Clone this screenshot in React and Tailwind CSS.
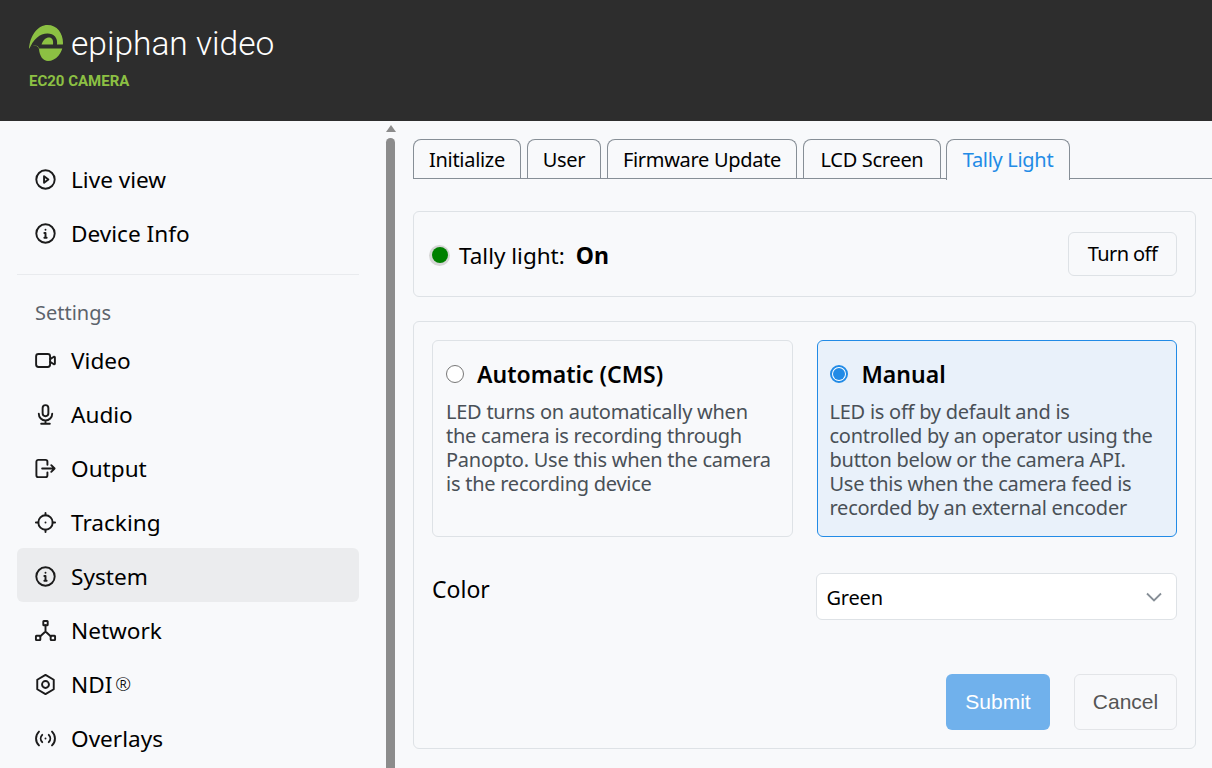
import React from 'react';

const ic = {
  width: 23,
  height: 23,
  viewBox: '0 0 24 24',
  fill: 'none',
  stroke: 'currentColor',
  strokeWidth: 2,
  strokeLinecap: 'round',
  strokeLinejoin: 'round',
};

const icons = {
  play: (
    <svg {...ic}>
      <circle cx="12" cy="12" r="9.6" />
      <path d="M10.5 8.5v7l4.5-3.5z" />
    </svg>
  ),
  info: (
    <svg {...ic}>
      <circle cx="12" cy="12" r="9.6" />
      <path d="M12 8h.01M10.8 11.5H12v5M10.8 16.5h2.4" />
    </svg>
  ),
  video: (
    <svg {...ic}>
      <rect x="2.2" y="5.2" width="14.6" height="13.6" rx="2.5" />
      <path d="M16.8 10.5l4-2.4c.5-.2 1 0 1 .5v6.8c0 .5-.5.7-1 .5l-4-2.4" />
    </svg>
  ),
  mic: (
    <svg {...ic}>
      <rect x="9" y="2.2" width="6" height="11.6" rx="3" />
      <path d="M5 11.2a7 7 0 0 0 14 0M12 18.2v3.4M7.5 21.6h9" />
    </svg>
  ),
  output: (
    <svg {...ic}>
      <path d="M14 8V5a2 2 0 0 0-2-2H4.5a2 2 0 0 0-2 2v14a2 2 0 0 0 2 2H12a2 2 0 0 0 2-2v-3" />
      <path d="M8.5 12h13M18 8.5l3.5 3.5-3.5 3.5" />
    </svg>
  ),
  tracking: (
    <svg {...ic}>
      <circle cx="12" cy="12" r="7.5" />
      <path d="M12 2v2.5M12 19.5V22M2 12h2.5M19.5 12H22M12 12h.01" />
    </svg>
  ),
  network: (
    <svg {...ic}>
      <rect x="9.7" y="2" width="4.6" height="4.6" rx=".6" />
      <rect x="2" y="17.4" width="4.6" height="4.6" rx=".6" />
      <rect x="17.4" y="17.4" width="4.6" height="4.6" rx=".6" />
      <path d="M12 6.6V13M12 13l-5.4 5M12 13l5.4 5" />
    </svg>
  ),
  ndi: (
    <svg {...ic}>
      <path d="M12 2l8.6 5v10L12 22l-8.6-5V7z" />
      <circle cx="12" cy="12" r="3.6" />
    </svg>
  ),
  overlays: (
    <svg {...ic}>
      <path d="M12 12h.01M8.6 8.2a5.4 5.4 0 0 0 0 7.6M15.4 8.2a5.4 5.4 0 0 1 0 7.6M5.2 4.8a10 10 0 0 0 0 14.4M18.8 4.8a10 10 0 0 1 0 14.4" />
    </svg>
  ),
};

function NavItem({ icon, label, active, top, children }) {
  return (
    <div className={`flex h-[54px] items-center gap-[14px] rounded-md pl-[17px] ${top ? '' : 'pt-[2px]'} ${active ? 'bg-[#ebecee]' : ''}`}>
      <span className="flex h-[23px] w-[23px] shrink-0 items-center justify-center text-[#1b1b1b]">{icons[icon]}</span>
      <span className="pt-[1px] text-[22.6px] text-black">
        {label}
        {children}
      </span>
    </div>
  );
}

function Tab({ label, active, className }) {
  return (
    <div
      className={`relative flex items-center justify-center rounded-t-lg border border-b-0 border-[#868e96] text-[20px] tracking-[-0.3px] ${className} ${
        active ? 'z-10 h-[41px] self-start bg-[#f8f9fb] text-[#228be6]' : 'h-10 text-black'
      }`}
    >
      {label}
    </div>
  );
}

function Option({ title, text, selected }) {
  return (
    <div
      className={`h-[197px] rounded-md border pr-4 pt-[19px] ${
        selected ? 'border-[#228be6] bg-[#e9f1fa] pl-3' : 'border-[#dee2e6] pl-[13px]'
      }`}
    >
      <div className={`flex h-7 items-center ${selected ? 'gap-[14px]' : 'gap-[13px]'}`}>
        {selected ? (
          <span className="flex h-[18px] w-[18px] items-center justify-center rounded-full border-2 border-[#228be6] bg-white">
            <span className="h-3 w-3 rounded-full bg-[#228be6]" />
          </span>
        ) : (
          <span className="h-[18px] w-[18px] rounded-full border-[1.5px] border-[#777] bg-white" />
        )}
        <span className="text-[23px] font-semibold text-black">{title}</span>
      </div>
      <p className="mt-3 text-[20px] leading-6 tracking-[-0.25px] text-[#495057]">{text}</p>
    </div>
  );
}

export default function App() {
  return (
    <div className="flex h-[768px] flex-col overflow-hidden bg-[#f8f9fb] font-['Noto_Sans',sans-serif]">
      {/* Header */}
      <header className="h-[121px] shrink-0 bg-[#2d2d2d] pl-[29px] pt-[25px]">
        <div className="flex items-center gap-2">
          <svg width="35" height="37" viewBox="29 25 35 37">
            <path
              d="M29 49C30 35 38 25 47.5 25C57 25 63 33 63 43C63 53 56 61 48 61C43 61 39.5 56 39 49C38 45 32 44 29 49Z"
              fill="#8cc043"
            />
            <path
              d="M29 50C33 39 40 33.5 47.5 33.5C54 33.5 58 38 57 44.5L64 44.5L64 48.5L39 48.5C38.5 46 36 45 33 46C31.5 46.5 30 48 29 50Z"
              fill="#2d2d2d"
            />
            <path d="M41.5 44.5C43 40 46 37.5 49 37.5C52 37.5 53.5 40 53 44.5Z" fill="#8cc043" />
          </svg>
          <span className="-ml-px font-['Roboto',sans-serif] text-[33.5px] font-light leading-[37px] text-white">epiphan video</span>
        </div>
        <div className="mt-[11px] font-['Roboto',sans-serif] text-[15px] font-bold leading-4 text-[#8cc043]">EC20 CAMERA</div>
      </header>

      <div className="flex min-h-0 flex-1">
        {/* Sidebar */}
        <aside className="w-[386px] shrink-0 pl-[17px] pr-[27px] pt-[31px]">
          <NavItem top icon="play" label="Live view" />
          <NavItem top icon="info" label="Device Info" />
          <div className="mt-[14px] border-t border-[#e9ebee]" />
          <div className="flex h-[57px] items-center pl-[18px] pt-[18px] text-[20px] text-[#5c636b]">Settings</div>
          <NavItem icon="video" label="Video" />
          <NavItem icon="mic" label="Audio" />
          <NavItem icon="output" label="Output" />
          <NavItem icon="tracking" label="Tracking" />
          <NavItem icon="info" label="System" active />
          <NavItem icon="network" label="Network" />
          <NavItem icon="ndi" label="NDI">
            <span className="relative -top-[2px] ml-[3px] text-[19px] font-light">®</span>
          </NavItem>
          <NavItem icon="overlays" label="Overlays" />
        </aside>

        {/* Scrollbar */}
        <div className="flex w-[9px] shrink-0 flex-col items-center">
          <div className="mt-1 h-0 w-0 border-x-[5px] border-b-[7px] border-x-transparent border-b-[#8c8c8c]" />
          <div className="mt-[6px] w-full flex-1 rounded-t-[5px] bg-[#8c8c8c]" />
        </div>

        {/* Main */}
        <main className="min-w-0 flex-1 pl-[18px] pt-[18px]">
          <div className="flex h-10 gap-[6px] border-b border-[#868e96]">
            <Tab className="w-[108px]" label="Initialize" />
            <Tab className="w-[74px]" label="User" />
            <Tab className="w-[190px]" label="Firmware Update" />
            <Tab className="w-[138px]" label="LCD Screen" />
            <Tab className="-ml-px w-[124px]" label="Tally Light" active />
          </div>

          <div className="mr-4">
            <section className="mt-8 flex h-[86px] items-center justify-between rounded-md border border-[#dee2e6] pl-[15px] pr-[18px]">
              <div className="flex items-center pt-[2px]">
                <span className="flex h-[21px] w-[21px] items-center justify-center rounded-full bg-[#d6d6d6]">
                  <span className="h-4 w-4 rounded-full bg-[#008000]" />
                </span>
                <span className="ml-[9px] pt-[1px] text-[22.5px] text-black">Tally light:</span>
                <span className="ml-[11px] pt-[1px] text-[23px] font-bold text-black">On</span>
              </div>
              <div className="flex h-11 w-[109px] items-center justify-center rounded-md border border-[#dee2e6] text-[20px] tracking-[-0.6px] text-black">
                Turn off
              </div>
            </section>

            <section className="mt-6 h-[428px] rounded-md border border-[#dee2e6] px-[18px] pt-[18px]">
              <div className="grid grid-cols-2 gap-6">
                <Option
                  title="Automatic (CMS)"
                  text="LED turns on automatically when the camera is recording through Panopto. Use this when the camera is the recording device"
                />
                <Option
                  selected
                  title="Manual"
                  text="LED is off by default and is controlled by an operator using the button below or the camera API. Use this when the camera feed is recorded by an external encoder"
                />
              </div>

              <div className="mt-9 grid grid-cols-2 gap-6">
                <div className="text-[23px] leading-8 text-black">Color</div>
                <div className="-ml-px flex h-[47px] items-center justify-between rounded-md border border-[#dee2e6] bg-white pl-[10px] pr-[14px] pt-[3px] text-[20px] tracking-[-0.2px] text-black">
                  Green
                  <svg className="-mt-[3px]" width="16" height="10" viewBox="0 0 16 10" fill="none" stroke="#868e96" strokeWidth="1.8">
                    <path d="M1 1.5l7 7 7-7" />
                  </svg>
                </div>
              </div>

              <div className="mt-[54px] flex justify-end gap-6 font-['Liberation_Sans',sans-serif] text-[21px]">
                <div className="flex h-14 w-[104px] items-center justify-center rounded-md bg-[#70b1ec] text-white">Submit</div>
                <div className="flex h-14 w-[103px] items-center justify-center rounded-md border border-[#e3e5e8] text-[#555]">Cancel</div>
              </div>
            </section>
          </div>
        </main>
      </div>
    </div>
  );
}
